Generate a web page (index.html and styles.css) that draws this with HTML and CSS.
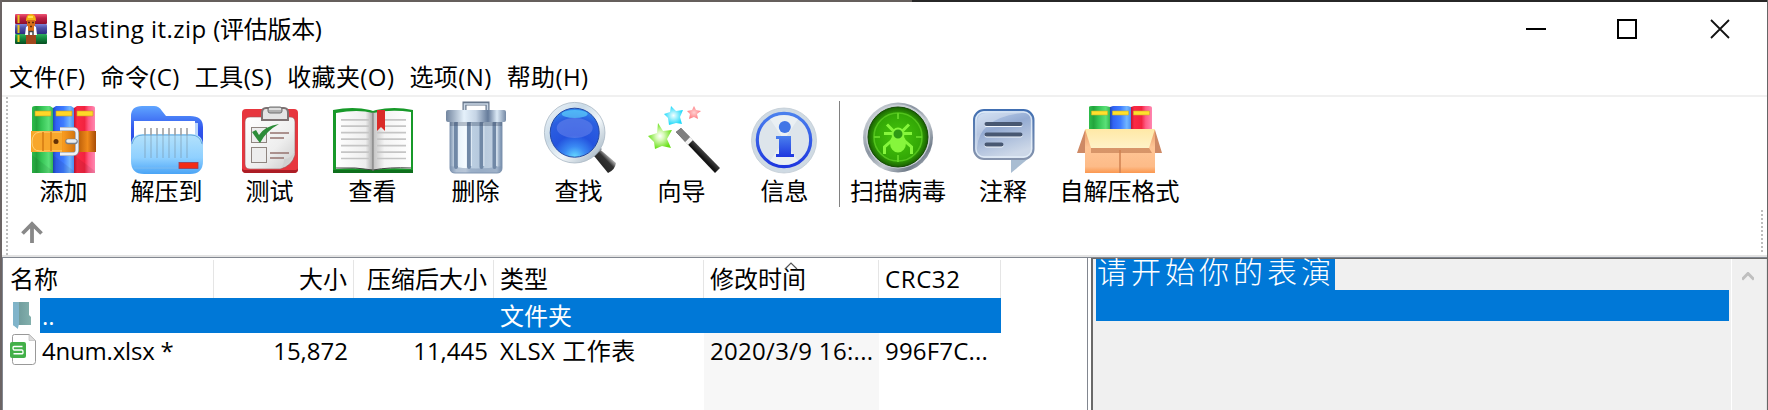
FILE: index.html
```
<!DOCTYPE html>
<html lang="zh-CN">
<head>
<meta charset="utf-8">
<title>Blasting it.zip</title>
<link rel="stylesheet" href="styles.css">
</head>
<body>
<svg class="defs" width="0" height="0" aria-hidden="true">
<defs>
<linearGradient id="gr"><stop offset="0" stop-color="#2ebd4b"/><stop offset=".22" stop-color="#23a53d"/><stop offset=".45" stop-color="#35c455"/><stop offset=".8" stop-color="#5be078"/><stop offset="1" stop-color="#33b650"/></linearGradient>
<linearGradient id="bl"><stop offset="0" stop-color="#1d49b8"/><stop offset=".15" stop-color="#3162f4"/><stop offset=".5" stop-color="#3f7dff"/><stop offset=".8" stop-color="#72b6ff"/><stop offset="1" stop-color="#4b8ef0"/></linearGradient>
<linearGradient id="rd"><stop offset="0" stop-color="#c41330"/><stop offset=".15" stop-color="#fb2a44"/><stop offset=".5" stop-color="#f22340"/><stop offset=".7" stop-color="#ff5c86"/><stop offset="1" stop-color="#ff86b0"/></linearGradient>
<linearGradient id="belt"><stop offset="0" stop-color="#f6a427"/><stop offset=".15" stop-color="#ffb93a"/><stop offset=".3" stop-color="#e58412"/><stop offset=".5" stop-color="#f79a1f"/><stop offset=".75" stop-color="#c4650c"/><stop offset=".87" stop-color="#f08a1a"/><stop offset="1" stop-color="#a84c06"/></linearGradient>
<linearGradient id="fb" x2="0" y2="1"><stop offset="0" stop-color="#5fa5ff"/><stop offset=".5" stop-color="#3156ee"/><stop offset="1" stop-color="#2846d8"/></linearGradient>
<linearGradient id="ff" x2="0" y2="1"><stop offset="0" stop-color="#b4e2fb"/><stop offset=".6" stop-color="#8fd0ff"/><stop offset="1" stop-color="#4aa4f6"/></linearGradient>
<linearGradient id="pg" x2="1" y2="1"><stop offset="0" stop-color="#fff"/><stop offset=".6" stop-color="#eee"/><stop offset="1" stop-color="#c9c9c9"/></linearGradient>
<linearGradient id="pl"><stop offset="0" stop-color="#fff"/><stop offset=".8" stop-color="#eee"/><stop offset="1" stop-color="#aaa"/></linearGradient>
<linearGradient id="pr"><stop offset="0" stop-color="#c2c2c2"/><stop offset=".3" stop-color="#f4f4f4"/><stop offset="1" stop-color="#fff"/></linearGradient>
<linearGradient id="can"><stop offset="0" stop-color="#7c93b0"/><stop offset=".12" stop-color="#e5f0f9"/><stop offset=".3" stop-color="#f5fbff"/><stop offset=".4" stop-color="#bccfe2"/><stop offset=".6" stop-color="#b5c8dc"/><stop offset=".9" stop-color="#c3d2e2"/><stop offset="1" stop-color="#6d86a6"/></linearGradient>
<linearGradient id="lid"><stop offset="0" stop-color="#72859f"/><stop offset=".3" stop-color="#e5f1fb"/><stop offset=".5" stop-color="#c5d4e5"/><stop offset=".7" stop-color="#657b9a"/><stop offset=".85" stop-color="#dceaf6"/><stop offset="1" stop-color="#7589a5"/></linearGradient>
<radialGradient id="lens" cy="1" r="1"><stop offset="0" stop-color="#67dcff"/><stop offset=".22" stop-color="#3a8af4"/><stop offset=".45" stop-color="#2453de"/><stop offset=".8" stop-color="#2c5fe0"/><stop offset="1" stop-color="#2f8cf0"/></radialGradient>
<linearGradient id="ring" x2="1" y2="1"><stop offset="0" stop-color="#f4f9fc"/><stop offset=".35" stop-color="#c9dae7"/><stop offset=".6" stop-color="#f2f7fa"/><stop offset="1" stop-color="#91a5b6"/></linearGradient>
<linearGradient id="hd" x2="1" y2="0" y1="1"><stop offset="0" stop-color="#111"/><stop offset=".55" stop-color="#333"/><stop offset=".7" stop-color="#ccc"/><stop offset="1" stop-color="#222"/></linearGradient>
<radialGradient id="sg"><stop offset="0" stop-color="#fff"/><stop offset=".35" stop-color="#d7f9b7"/><stop offset="1" stop-color="#69e018"/></radialGradient>
<radialGradient id="sc"><stop offset="0" stop-color="#f4ffff"/><stop offset="1" stop-color="#1fd9fa"/></radialGradient>
<radialGradient id="sr"><stop offset="0" stop-color="#ffd0d0"/><stop offset="1" stop-color="#ff7e83"/></radialGradient>
<linearGradient id="wand" gradientUnits="userSpaceOnUse" x1="702" y1="145" x2="696" y2="151"><stop offset="0" stop-color="#777"/><stop offset=".5" stop-color="#3c3c3c"/><stop offset="1" stop-color="#151515"/></linearGradient>
<linearGradient id="ib" x2="0" y2="1"><stop offset="0" stop-color="#4a80ee"/><stop offset="1" stop-color="#1e37df"/></linearGradient>
<linearGradient id="metal" x2="1" y2="1"><stop offset="0" stop-color="#e6eaee"/><stop offset=".4" stop-color="#8b95a2"/><stop offset=".6" stop-color="#c6ccd2"/><stop offset=".8" stop-color="#727d8b"/><stop offset="1" stop-color="#dfe4e8"/></linearGradient>
<radialGradient id="rad"><stop offset="0" stop-color="#46c60c"/><stop offset=".75" stop-color="#33a806"/><stop offset="1" stop-color="#1a5f02"/></radialGradient>
<linearGradient id="cm" x2=".4" y2="1"><stop offset="0" stop-color="#c3d8f2"/><stop offset=".45" stop-color="#94abd2"/><stop offset="1" stop-color="#cdd8e8"/></linearGradient>
<linearGradient id="cs" x2="0" y2="1"><stop offset="0" stop-color="#416fb2"/><stop offset="1" stop-color="#8694ad"/></linearGradient>
<linearGradient id="bx" x2="0" y2="1"><stop offset="0" stop-color="#e89b66"/><stop offset=".4" stop-color="#ffc596"/><stop offset=".85" stop-color="#fdbb88"/><stop offset="1" stop-color="#fb9850"/></linearGradient>
<linearGradient id="fl" x2="0" y2="1"><stop offset="0" stop-color="#ffe9a6"/><stop offset="1" stop-color="#fff2c8"/></linearGradient>
<linearGradient id="sh1" x2="0" y2="1"><stop offset="0" stop-color="#ef5674"/><stop offset=".4" stop-color="#c02045"/><stop offset="1" stop-color="#8d0e2b"/></linearGradient>
<linearGradient id="sh2" x2="0" y2="1"><stop offset="0" stop-color="#7e83d6"/><stop offset=".4" stop-color="#4d50a8"/><stop offset="1" stop-color="#2c2c80"/></linearGradient>
<linearGradient id="sh3" x2="0" y2="1"><stop offset="0" stop-color="#2fae5d"/><stop offset=".4" stop-color="#148a40"/><stop offset="1" stop-color="#064d20"/></linearGradient>
<linearGradient id="fold"><stop offset="0" stop-color="#78b2c6"/><stop offset=".35" stop-color="#86b4c2"/><stop offset=".36" stop-color="#729e9e"/><stop offset="1" stop-color="#83b0ad"/></linearGradient>
</defs>
</svg>

<div class="window">
  <header class="titlebar">
    <svg class="appicon" viewBox="15 13 32 32">
      <rect x="15" y="14" width="32" height="10" rx="1" fill="url(#sh1)"/>
      <rect x="15" y="24" width="32" height="10" rx="1" fill="url(#sh2)"/>
      <rect x="15" y="34" width="32" height="10" rx="1" fill="url(#sh3)"/>
      <path d="M18.500 15v8M18.500 25v8M18.500 35v7" stroke="#e8c51c" stroke-width="2"/>
      <path d="M26 34h10v10H26z" fill="#a0471d"/>
      <path d="M26 21q0-7 5-7t5 7z" fill="#f4b312"/>
      <path d="M28 16h5v2h-5z" fill="#ffe04e"/>
      <path d="M27 20h8v6h-8z" fill="#d96f18"/>
      <path d="M26 27q5-4 10 0l1 8H25z" fill="#fff"/>
      <path d="M28 25h6v6h-6z" fill="#d96f18"/>
      <path d="M28 22.500h2M32 22.500h2M30 26.500h2" stroke="#5c2b0b" stroke-width="1.300"/>
      <path d="M29 35v-3.500h4V35" fill="none" stroke="#444" stroke-width="1.500"/>
    </svg>
    <h1 class="title"><span class="title-name">Blasting it.zip </span><span>(评估版本)</span></h1>
    <svg class="winbtns" viewBox="1520 15 220 30">
      <path d="M1526 29h20" stroke="#000" stroke-width="2"/>
      <rect x="1618" y="20" width="18" height="18" fill="none" stroke="#000" stroke-width="2"/>
      <path d="M1711 20l18 18M1729 20l-18 18" stroke="#111" stroke-width="1.800"/>
    </svg>
  </header>

  <nav class="menubar">
    <span>文件(F)</span><span>命令(C)</span><span>工具(S)</span><span>收藏夹(O)</span><span>选项(N)</span><span>帮助(H)</span>
  </nav>

  <section class="bars">
    <i class="grip"></i>
    <div class="bars-main">
      <div class="toolbar">
        <div class="tool">
          <svg viewBox="12 100 103 76">
            <path d="M32 108q0-2 3-2h15l3 2v65H32z" fill="url(#gr)"/>
            <path d="M53 108l3-2h15l3 2v65H53z" fill="url(#bl)"/>
            <path d="M74 108l3-2h15q3 0 3 2v65H74z" fill="url(#rd)"/>
            <path d="M35 111h16v5H35zM56 111h16v5H56zM77 111h16v5H77z" fill="#ffd727" stroke="#c79c24" stroke-width=".6"/>
            <path d="M32 155l21 16v2H32zM53 155l21 16v2H53zM74 155l21 16v2H74z" fill="#000" opacity=".07"/>
            <path d="M31 131h65v21H31z" fill="url(#belt)"/>
            <path d="M62 132H40q-8 1-8 10t8 9h22" fill="#f8a72c" stroke="#ffd277"/>
            <path d="M43 132v19M51 132v19" stroke="#d37b12" stroke-width="1.500"/>
            <circle cx="56" cy="141.500" r="2.500" fill="#633006"/>
            <path d="M60 129h13q4 0 4 4v17q0 4-4 4H60" fill="none" stroke="#858b96" stroke-width="4"/>
            <path d="M60 129h13q4 0 4 4v17q0 4-4 4H60" fill="none" stroke="#eef1f6" stroke-width="2.800"/>
            <path d="M68 141.500h7" stroke="#76808c" stroke-width="5.500" stroke-linecap="round"/>
            <path d="M68 141h7" stroke="#e9edf2" stroke-width="3.500" stroke-linecap="round"/>
          </svg>
          <span>添加</span>
        </div>
        <div class="tool">
          <svg viewBox="115 100 103 76">
            <path d="M131 116q0-10 11-10h12q5 0 8 5l4 5h24q13 0 13 11v25h-72z" fill="url(#fb)"/>
            <path d="M137 123q30-2 61 0v24h-61z" fill="#b9d5fb"/>
            <path d="M134 121h61v26h-61z" fill="#fff"/>
            <path d="M131 146q0-12 12-12h48q12 0 12 12v15q0 13-13 13h-46q-13 0-13-13z" fill="url(#ff)"/>
            <path d="M132 144q2-9 11-9h48q9 0 11 9" fill="none" stroke="#65a8de"/>
            <path d="M145 128v7M151 128v7M157 128v7M163 128v7M169 128v7M175 128v7M181 128v7M187 128v7" stroke="#9a9a9a" stroke-width="1.500"/>
            <path d="M145 135v23M151 135v23M157 135v23M163 135v23M169 135v23M175 135v23M181 135v23M187 135v23" stroke="#7893a6" stroke-width="1.500" opacity=".4"/>
            <path d="M134 168h44" stroke="#7dbbf0"/>
            <rect x="179" y="162.500" width="19" height="6" fill="#f32b16" stroke="#9d3c53" stroke-width=".8"/>
          </svg>
          <span>解压到</span>
        </div>
        <div class="tool">
          <svg viewBox="218 100 103 76">
            <rect x="242" y="109" width="56" height="64" rx="4" fill="#e7363e"/>
            <path d="M242 168v1q0 4 4 4h48q4 0 4-4v-1q0 2-4 2h-48q-4 0-4-2z" fill="#ac1d25"/>
            <path d="M250 117h40q5 0 5 5v33q-3 11-15 14h-30q-5 0-5-5v-42q0-5 5-5z" fill="url(#pg)" stroke="#9b5458" stroke-width=".6"/>
            <path d="M295 151q-3 12-15 18 4-3 4-10 7 0 11-8z" fill="#d0d0d0"/>
            <path d="M266 108h18q4 0 4 5v7h-26v-7q0-5 4-5z" fill="#e4e4e4" stroke="#7d7272" stroke-width="2"/>
            <rect x="268" y="107" width="14" height="6" rx="2" fill="#b0b0b0" stroke="#707070"/>
            <path d="M269 109h12" stroke="#eee" stroke-width="1.500"/>
            <rect x="251.500" y="127.500" width="15" height="15" fill="#ededed" stroke="#8f8580"/>
            <rect x="251.500" y="147.500" width="15" height="15" fill="#ededed" stroke="#8f8580"/>
            <path d="M252 132l4-2 3 5q6-9 20-11-13 7-19 19-4-5-8-11z" fill="#2c8c38"/>
            <path d="M270 133h19M270 138h14M270 153h19M270 158h14" stroke="#95736f" stroke-width="1.300"/>
          </svg>
          <span>测试</span>
        </div>
        <div class="tool">
          <svg viewBox="321 100 103 76">
            <path d="M333 110q20-4 37 0l3 1 3-1q18-4 37 0v63h-34l-6-2-6 2h-34z" fill="#179929"/>
            <path d="M333 170h80v3H333z" fill="#0e6f1d"/>
            <path d="M336 113q22-4 37 0v57q-16-3-37-1z" fill="url(#pl)"/>
            <path d="M373 113q18-4 38-1v57q-22-2-38 1z" fill="url(#pr)"/>
            <path d="M336 168q20-1 37 2 16-3 38-2" fill="none" stroke="#444" stroke-width="1"/>
            <path d="M373 112v59" stroke="#777"/>
            <path d="M341 119.800h28M341 126.200h28M341 132.700h28M341 139.200h28M341 145.600h28M341 152.100h28M341 158.500h28M377 119.800h29M377 126.200h29M377 132.700h29M377 139.200h29M377 145.600h29M377 152.100h29M377 158.500h29" stroke="#c5c5c5" stroke-width="1.700"/>
            <path d="M377 110h8v21l-4-4-4 4z" fill="#da2b28"/>
          </svg>
          <span>查看</span>
        </div>
        <div class="tool">
          <svg viewBox="424 100 103 76">
            <path d="M464.500 111v-7.500h23v7.500" fill="none" stroke="#65758a" stroke-width="4"/>
            <path d="M464.500 111v-7h23v7" fill="none" stroke="#ccd9e7" stroke-width="1.600"/>
            <path d="M450 121h52v47q0 5-5 5h-42q-5 0-5-5z" fill="url(#can)" stroke="#8297b2"/>
            <path d="M450 166q26 5 52 0v2q0 5-5 5h-42q-5 0-5-5z" fill="#7b92af" opacity=".5"/>
            <path d="M456 123v44M469 123v44M481.500 123v44M494.500 123v44" stroke="#7088a6" stroke-width="4" stroke-linecap="round"/>
            <path d="M458.300 123v43M471.300 123v43M483.800 123v43M496.800 123v43" stroke="#e6f0f9" stroke-width="1"/>
            <path d="M450 122h52v4h-52z" fill="#3f5069" opacity=".35"/>
            <rect x="446" y="110" width="60" height="12" rx="2" fill="url(#lid)"/>
          </svg>
          <span>删除</span>
        </div>
        <div class="tool">
          <svg viewBox="527 100 103 76">
            <path d="M590 151l6-5 20 17q-1 7-8 10z" fill="url(#hd)"/>
            <path d="M591 153l7-7 4 3-8 8z" fill="#8a8f98"/>
            <circle cx="574.700" cy="132.700" r="30.300" fill="url(#ring)" stroke="#a9b8c4" stroke-width=".8"/>
            <circle cx="574.700" cy="132.700" r="24.500" fill="url(#lens)" stroke="#2348a4" stroke-width="1"/>
            <ellipse cx="574.700" cy="128" rx="18" ry="10" fill="#7f93f0" opacity=".4"/>
            <ellipse cx="574.700" cy="114" rx="13" ry="4" fill="#6be4ff" opacity=".55"/>
          </svg>
          <span>查找</span>
        </div>
        <div class="tool">
          <svg viewBox="630 100 103 76">
            <path d="M658 123l5 8 9-1-5 9 4 9-9-2-7 3-1-7-6-6 9-3z" fill="url(#sg)"/>
            <path d="M671 106l5 5 7-1-3 7 2 7-6-1-7 2-1-7-4-4 6-2z" fill="url(#sc)"/>
            <path d="M694 106l2 4 5 1-4 3 1 5-4-2-5 2 1-5-3-3 5-1z" fill="url(#sr)"/>
            <path d="M676 132l5-4 39 40-5 5z" fill="url(#wand)"/>
            <path d="M676 132l5-4 9 9-5 5z" fill="#808080"/>
            <path d="M685 142l5-5 3 3-5 5z" fill="#f3f3f3"/>
          </svg>
          <span>向导</span>
        </div>
        <div class="tool">
          <svg viewBox="733 100 103 76">
            <circle cx="784" cy="140.500" r="32.500" fill="#cfdae3" stroke="#c2ccd4" stroke-width=".8"/>
            <circle cx="784" cy="140" r="26.700" fill="#dde5eb" stroke="url(#ib)" stroke-width="3.200"/>
            <path d="M784 140l-14-21q14-8 28 0zM784 140l-14 21q14 8 28 0z" fill="#f4f7f9" opacity=".6"/>
            <circle cx="784.800" cy="127" r="6" fill="#4176e6"/>
            <path d="M776 136h15v18h3v3h-18v-3h3v-15h-3z" fill="url(#ib)"/>
          </svg>
          <span>信息</span>
        </div>
        <i class="separator"></i>
        <div class="tool">
          <svg viewBox="846 100 104 76">
            <circle cx="898" cy="137.500" r="35" fill="url(#metal)"/>
            <circle cx="898" cy="136.500" r="32" fill="#c9cfd5"/>
            <circle cx="898" cy="137" r="30" fill="url(#rad)" stroke="#134b02" stroke-width="1"/>
            <circle cx="898" cy="137" r="24" fill="none" stroke="#52c31c" stroke-width="1.600"/>
            <path d="M898 113v6M898 155v7M874 137h6M916 137h6" stroke="#61d326" stroke-width="2"/>
            <g stroke="#86f63c" stroke-width="3" fill="none">
              <path d="M887 124.500l6 6M909 124.500l-6 6M884 133.500h28M893 139.500l-8.500 7.500v7M903 139.500l8.500 7.500v7"/>
            </g>
            <ellipse cx="898" cy="143" rx="8" ry="9.500" fill="#86f63c"/>
            <circle cx="898" cy="134" r="5.500" fill="#2e9a14" stroke="#86f63c" stroke-width="2"/>
          </svg>
          <span>扫描病毒</span>
        </div>
        <div class="tool tool-comment">
          <svg viewBox="950 100 106 76">
            <path d="M1011 158h18l-18 15z" fill="#a9bdd2"/>
            <rect x="974" y="110" width="59.500" height="49" rx="10" fill="url(#cm)" stroke="url(#cs)" stroke-width="2"/>
            <path d="M977 148q2-30 45-35h-36q-9 0-9 10z" fill="#fff" opacity=".32"/>
            <rect x="976" y="112" width="55.500" height="45" rx="8" fill="none" stroke="#e9f2fb" stroke-width="1.300" opacity=".8"/>
            <path d="M986.500 125h34M986.500 135.500h34M986.500 145.500h15" stroke="#f2f7fc" stroke-width="4" stroke-linecap="round"/>
            <path d="M986.500 124h34M986.500 134.500h34M986.500 144.500h15" stroke="#485872" stroke-width="4" stroke-linecap="round"/>
          </svg>
          <span>注释</span>
        </div>
        <div class="tool tool-sfx">
          <svg viewBox="1056 100 130 76">
            <path d="M1089 107q0-1 3-1h14l4 1v26h-21z" fill="url(#gr)"/>
            <path d="M1110 107l3-1h15l3 1v26h-21z" fill="url(#bl)"/>
            <path d="M1131 107l3-1h15q3 0 3 2v25h-21z" fill="url(#rd)"/>
            <path d="M1091.500 111h16v4h-16zM1112.500 111h16v4h-16zM1133.500 111h16v4h-16z" fill="#ffe02d" stroke="#cfae25" stroke-width=".6"/>
            <path d="M1085 130l-8 23h8zM1155 130l7 23h-7z" fill="#ce8965"/>
            <path d="M1085 130h70v43h-70z" fill="url(#bx)"/>
            <path d="M1091 148h58l3 5h-61z" fill="#a95d36" opacity=".45"/>
            <path d="M1085 129h70l-6 19h-58z" fill="url(#fl)"/>
            <path d="M1120 150v23" stroke="#cf8050" stroke-width="1.500"/>
          </svg>
          <span>自解压格式</span>
        </div>
      </div>
      <div class="addressbar">
        <svg viewBox="20 220 24 24"><path d="M32 243v-18M22.500 233.500l9.500-9.500 9.500 9.500" fill="none" stroke="#888" stroke-width="3.800"/></svg>
        <i class="grip grip-right"></i>
      </div>
    </div>
  </section>

  <main class="panes">
    <section class="list">
      <div class="row head">
        <span class="c-name">名称</span><span class="num">大小</span><span class="num">压缩后大小</span><span>类型</span><span class="sorted">修改时间<svg class="sortmark" viewBox="0 0 14 8"><path d="M1 7l6-6 6 6" fill="none" stroke="#555" stroke-width="1.200"/></svg></span><span class="crc">CRC32</span>
      </div>
      <div class="row selected">
        <span class="c-name"><svg class="fileicon" viewBox="10 299 30 34"><path d="M13 303h16v13l2 2v8H18v4l-5-4z" fill="url(#fold)"/><path d="M13 303l6 4v18l-1 4-5-3z" fill="#80b4ca"/></svg><b>..</b></span><span></span><span></span><span>文件夹</span><span></span><span></span>
      </div>
      <div class="row">
        <span class="c-name"><svg class="fileicon" viewBox="10 333 30 34"><path d="M14.500 334.500H29l6.500 6v21q0 3-3 3h-18q-2 0-2-3v-25q0-2 2-2z" fill="#fff" stroke="#999"/><path d="M29 334.500v6h6.500z" fill="#ddd" stroke="#bbb" stroke-width=".7"/><rect x="10" y="342" width="16" height="16" rx="2" fill="#43b049"/><path d="M22.500 346.500H14q-1 0-1 1.500t1 2h8q1 0 1 2t-1 1.800h-8.500" fill="none" stroke="#fff" stroke-width="1.400"/></svg><b class="fname">4num.xlsx *</b></span><span class="num">15,872</span><span class="num">11,445</span><span class="type">XLSX 工作表</span><span class="date">2020/3/9 16:...</span><span class="hash">996F7C...</span>
      </div>
      <div class="row filler"><span></span><span></span><span></span><span></span><span class="date"></span><span></span></div>
    </section>
    <section class="comment">
      <div class="note">
        <p class="note-line"><span>请开始你的表演</span></p>
        <p class="note-rest"></p>
      </div>
      <div class="scroll">
        <svg viewBox="0 0 12 10"><path d="M0 7.500L6 1.500l6 6" fill="none" stroke="#bfbfbf" stroke-width="3"/></svg>
      </div>
    </section>
  </main>
</div>
</body>
</html>
```
FILE: styles.css
```
* { box-sizing: border-box; }
body {
  margin: 0;
  width: 1768px;
  height: 410px;
  overflow: hidden;
  color: #000;
  font: 24px/30px "Open Sans", "Noto Sans CJK SC", sans-serif;
  white-space: nowrap;
}
.defs { display: block; width: 0; height: 0; }
.window {
  height: 410px;
  display: flex;
  flex-direction: column;
  background: #fff;
  border-left: 2px solid #6b6464;
  border-right: 1px solid #666;
}
.titlebar {
  height: 58px;
  display: flex;
  align-items: center;
  padding: 0 27px 0 13px;
  background: linear-gradient(90deg, #655f5c 910px, #272727 910px) 0 0 / 100% 2px no-repeat;
}
.appicon { width: 32px; height: 32px; }
.title { flex: 1; margin: 0 0 0 5px; font: inherit; letter-spacing: -.3px; }
.title-name { letter-spacing: .45px; }
.winbtns { width: 220px; height: 30px; margin-top: 2px; }
.menubar {
  height: 39px;
  display: flex;
  gap: 15px;
  padding: 4px 0 0 7px;
  letter-spacing: .4px;
  border-bottom: 2px solid #f0f0f0;
}
.bars { height: 161px; display: flex; border-bottom: 1px solid #828790; box-shadow: inset 0 -2px #e3e3e3; }
.grip {
  width: 2px;
  height: 158px;
  margin-left: 4px;
  background: repeating-linear-gradient(#bebebe 0 2px, transparent 2px 4px);
}
.bars-main { flex: 1; }
.toolbar { height: 113px; display: flex; padding: 3px 0 0 4px; }
.tool { width: 103px; text-align: center; }
.tool svg { display: block; width: 100%; height: 76px; }
.tool span { display: block; }
.separator { width: 1px; height: 106px; margin: 1px 6px 0 3px; background: #828282; }
.separator + .tool { width: 104px; }
.tool-comment { width: 106px; }
.tool-sfx { width: 130px; }
.tool-sfx span { margin-left: -3px; }
.addressbar { display: flex; align-items: center; padding: 0 4px 0 12px; }
.addressbar svg { width: 24px; height: 24px; }
.grip-right { height: 43px; margin-left: auto; }
.panes { flex: 1; display: flex; min-height: 0; }
.list { width: 1086px; border-left: 1px solid #828790; border-right: 1px solid #828790; }
.row {
  display: grid;
  grid-template-columns: 211px 140px 140px 210px 175px 122px;
  height: 35px;
  line-height: 35px;
}
.row > span { padding: 0 6px; }
.row .num { text-align: right; }
.head { height: 40px; padding-top: 2px; line-height: 38px; }
.head > span { border-right: 1px solid #e5e5e5; }
.head .sorted { position: relative; }
.head .crc { letter-spacing: .6px; }
.sortmark { position: absolute; left: 80px; top: 2px; width: 14px; height: 8px; }
.row .c-name { display: flex; padding-left: 7px; }
.c-name b { font-weight: 400; }
.fileicon { width: 30px; height: 34px; }
.selected { width: 998px; color: #fff; background: linear-gradient(90deg, #fff 37px, #0078d7 37px); }
.selected .c-name b { padding-left: 2px; }
.fname { padding-left: 2px; letter-spacing: -.2px; }
.type { letter-spacing: .5px; }
.date { background: #f7f7f7; letter-spacing: .3px; }
.hash { letter-spacing: .2px; }
.filler { height: 42px; }
.comment {
  flex: 1;
  display: flex;
  margin-left: 3px;
  background: #f0f0f0;
  border: solid #696969;
  border-width: 1px 0 0 2px;
}
.note { flex: 1; padding: 0 2px 0 3px; }
.note p { margin: 0; height: 31px; }
.note-line span {
  display: block;
  width: 239px;
  height: 31px;
  line-height: 23px;
  font-family: "Noto Sans CJK SC", sans-serif;
  font-weight: 300;
  font-size: 30px;
  letter-spacing: 4px;
  padding-left: 1px;
  color: #fff;
  background: #0078d7;
}
.note .note-rest { background: #0078d7; }
.scroll { width: 36px; padding: 13px 0 0 10px; border-left: 1px solid #fff; border-right: 1px solid #e3e3e3; }
.scroll svg { display: block; width: 12px; height: 10px; }
```
